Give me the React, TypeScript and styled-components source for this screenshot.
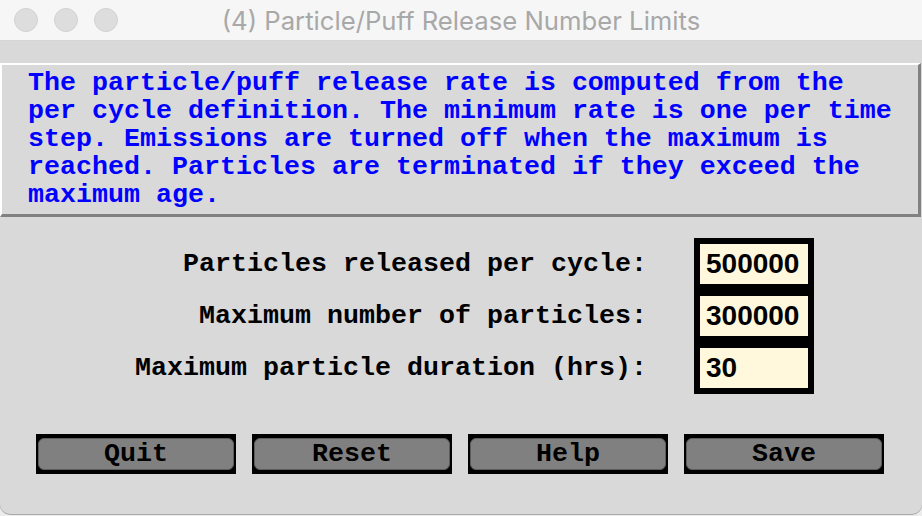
import React from "react";
import styled, { createGlobalStyle } from "styled-components";

const Global = createGlobalStyle`
  html, body { margin: 0; padding: 0; }
  body { background: #ececec; width: 922px; height: 516px; overflow: hidden; }
  * { box-sizing: border-box; }
`;

const Window = styled.div`
  width: 922px;
  height: 514px;
  background: #d9d9d9;
  border-bottom-left-radius: 10px;
  border-bottom-right-radius: 10px;
  box-shadow: 0 1px 0 #a9a9a9;
  overflow: hidden;
  display: flex;
  flex-direction: column;
`;

const TitleBar = styled.div`
  height: 41px;
  flex: none;
  background: #f6f6f6;
  border-bottom: 1px solid #d6d6d6;
  position: relative;
  display: flex;
  align-items: center;
  justify-content: center;
`;

const Lights = styled.div`
  position: absolute;
  left: 14px;
  top: 8px;
  display: flex;
  gap: 16px;
`;

const Light = styled.span`
  width: 24px;
  height: 24px;
  border-radius: 50%;
  background: #dddddd;
  border: 1px solid #d2d2d2;
`;

const Title = styled.div`
  font-family: Inter, "Noto Sans", sans-serif;
  font-size: 25.7px;
  color: #a8a8a8;
  line-height: 1;
  margin-top: 1px;
`;

const Message = styled.div`
  margin: 22px 1px 0 0;
  border-top: 2px solid #ffffff;
  border-left: 2px solid #ffffff;
  border-right: 3px solid #818181;
  border-bottom: 3px solid #818181;
  padding: 4px 0 5px 26px;
  font-family: "Liberation Mono", monospace;
  font-weight: bold;
  font-size: 26.67px;
  line-height: 28px;
  color: #0000ff;
  white-space: pre;
`;

const Form = styled.div`
  margin-top: 21px;
  display: grid;
  grid-template-columns: 647px 120px;
  grid-auto-rows: 52px;
  column-gap: 47px;
  align-items: center;
`;

const Label = styled.label`
  justify-self: end;
  font-family: "Liberation Mono", monospace;
  font-weight: bold;
  font-size: 26.67px;
  color: #000000;
  white-space: pre;
  margin-top: -1px;
`;

const EntryFrame = styled.div`
  width: 120px;
  height: 52px;
  background: #000000;
  padding: 6px;
`;

const Entry = styled.input`
  display: block;
  width: 108px;
  height: 40px;
  border: none;
  outline: none;
  margin: 0;
  padding: 0 0 0 6px;
  background: #fff8dc;
  font-family: "Liberation Sans", Arial, sans-serif;
  font-weight: bold;
  font-size: 28px;
  color: #000000;
`;

const ButtonRow = styled.div`
  margin-top: 40px;
  padding-left: 36px;
  display: flex;
  gap: 16px;
`;

const Button = styled.button`
  width: 200px;
  height: 40px;
  margin: 0;
  border: none;
  background: #000000;
  padding: 4px 2px 4px 2px;
  display: flex;
  cursor: pointer;
`;

const ButtonFace = styled.span`
  flex: 1;
  border-radius: 6px;
  background: #808080;
  border: 1px solid #5c5c5c;
  display: flex;
  align-items: center;
  justify-content: center;
  font-family: "Liberation Mono", monospace;
  font-weight: bold;
  font-size: 26.67px;
  color: #000000;
`;

const message = [
  "The particle/puff release rate is computed from the",
  "per cycle definition. The minimum rate is one per time",
  "step. Emissions are turned off when the maximum is",
  "reached. Particles are terminated if they exceed the",
  "maximum age.",
].join("\n");

const fields = [
  { label: "Particles released per cycle:", value: "500000" },
  { label: "Maximum number of particles:", value: "300000" },
  { label: "Maximum particle duration (hrs):", value: "30" },
];

const buttons = ["Quit", "Reset", "Help", "Save"];

export default function App() {
  return (
    <>
      <Global />
      <Window>
        <TitleBar>
          <Lights>
            <Light />
            <Light />
            <Light />
          </Lights>
          <Title>(4) Particle/Puff Release Number Limits</Title>
        </TitleBar>
        <Message>{message}</Message>
        <Form>
          {fields.map((f) => (
            <React.Fragment key={f.label}>
              <Label>{f.label}</Label>
              <EntryFrame>
                <Entry defaultValue={f.value} />
              </EntryFrame>
            </React.Fragment>
          ))}
        </Form>
        <ButtonRow>
          {buttons.map((b) => (
            <Button key={b}>
              <ButtonFace>{b}</ButtonFace>
            </Button>
          ))}
        </ButtonRow>
      </Window>
    </>
  );
}
